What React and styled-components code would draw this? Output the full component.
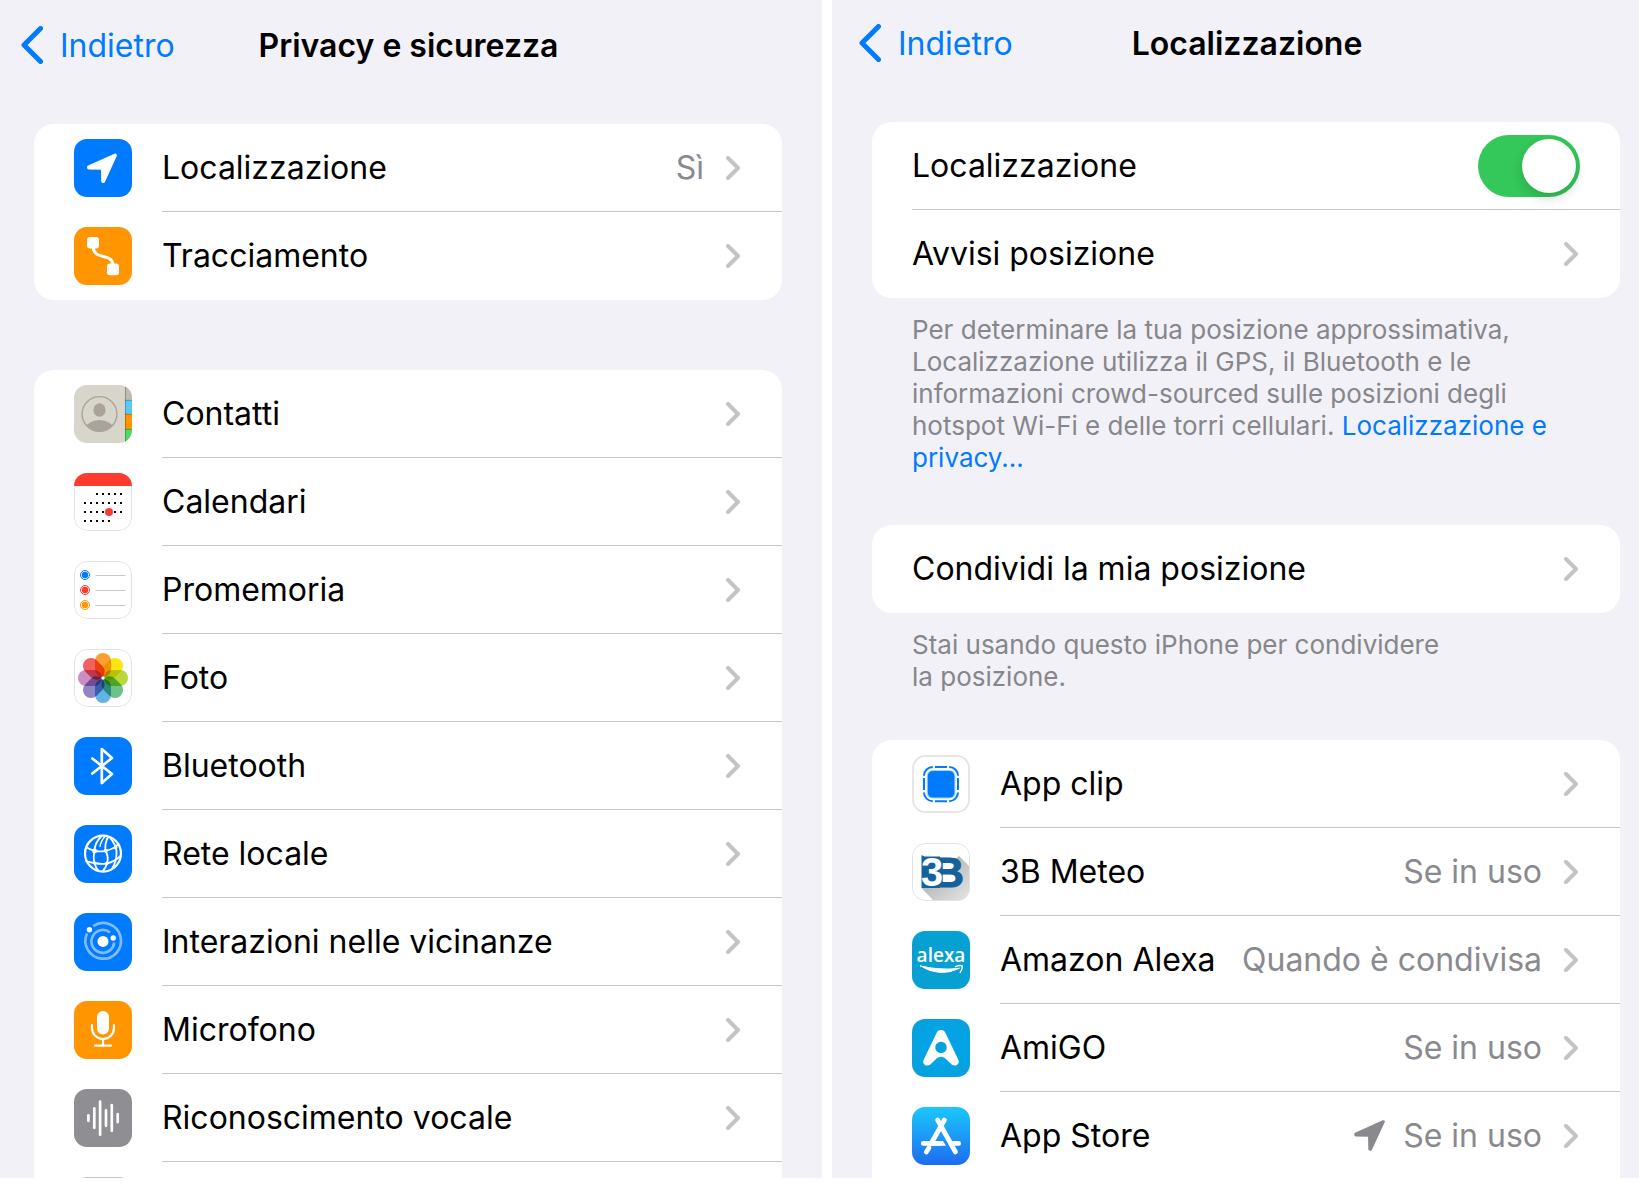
import React, { useState } from 'react';
import styled, { createGlobalStyle } from 'styled-components';

/* ---------- icons (58 x 58 tiles) ---------- */

const LocationIcon = () => (
    <Tile viewBox="0 0 58 58" $bg="#007aff">
        <path
            d="M41.2 16.2 L14.8 28 V28.8 L28.7 29 L28.9 42.3 H29.4 Z"
            fill="#fff"
            stroke="#fff"
            strokeWidth="3.4"
            strokeLinejoin="round"
        />
    </Tile>
);

const TrackingIcon = () => (
    <Tile viewBox="0 0 58 58" $bg="#ff9500">
        <rect x="13" y="10" width="12" height="11.6" rx="3" fill="#fff" />
        <rect x="33" y="36.6" width="12" height="11.6" rx="3" fill="#fff" />
        <path d="M19.2 20 C19.5 33.5 38 25.5 39 37.5" fill="none" stroke="#fff" strokeWidth="3" />
    </Tile>
);

const ContactsIcon = () => (
    <Tile viewBox="0 0 58 58" $bg="#d8d5cb">
        <rect x="51" y="0" width="7" height="15" fill="#c2bbb4" />
        <rect x="51" y="15" width="7" height="14" fill="#5ac8fa" />
        <rect x="51" y="29" width="7" height="15" fill="#ff9500" />
        <rect x="51" y="44" width="7" height="14" fill="#4cd964" />
        <path d="M51.5 0 V58 M51 15.3 H58 M51 29.3 H58 M51 44.3 H58" stroke="#000" strokeOpacity="0.25" />
        <clipPath id="contact-face">
            <circle cx="25.5" cy="29" r="17.5" />
        </clipPath>
        <g clipPath="url(#contact-face)" fill="#aaa39c">
            <ellipse cx="25.5" cy="25" rx="6.1" ry="6.7" />
            <ellipse cx="25.5" cy="44.5" rx="14" ry="9.5" />
        </g>
        <circle cx="25.5" cy="29" r="17.4" fill="none" stroke="#aaa39c" strokeWidth="1.4" />
    </Tile>
);

const calendarDots = [
    [21, [23, 29, 35, 41, 47]],
    [30, [11, 17, 23, 29, 35, 41, 47]],
    [39, [11, 17, 23, 29, 41, 47]],
    [48, [11, 17, 23, 29, 35]],
];

const CalendarIcon = () => (
    <Tile viewBox="0 0 58 58" $bg="#fff">
        <TileBorder />
        <rect width="58" height="13" fill="#ff3b30" />
        {calendarDots.map(([y, xs]) =>
            xs.map((x) => <rect key={`${x}-${y}`} x={x - 1} y={y - 1} width="2" height="2" fill="#000" />)
        )}
        <circle cx="35" cy="39" r="4" fill="#ff3b30" />
    </Tile>
);

const RemindersIcon = () => (
    <Tile viewBox="0 0 58 58" $bg="#fff">
        <TileBorder />
        {[
            ['#007aff', 14],
            ['#ff3b30', 29],
            ['#ff9500', 44],
        ].map(([color, y]) => (
            <g key={color}>
                <circle cx="11" cy={y} r="4.5" fill="none" stroke={color} />
                <circle cx="11" cy={y} r="3.2" fill={color} />
                <path d={`M21.5 ${y + 0.5} H51.5`} stroke="#c7c7cc" />
            </g>
        ))}
    </Tile>
);

const petals = ['#f9a033', '#fbe60f', '#b8d83c', '#6cc288', '#62b4e4', '#8f86c4', '#cb8ec4', '#f2605f'];

const PhotosIcon = () => (
    <Tile viewBox="0 0 58 58" $bg="#fff">
        <TileBorder />
        {petals.map((color, i) => (
            <Petal
                key={color}
                x="21"
                y="4"
                width="16"
                height="24"
                rx="8"
                fill={color}
                transform={`rotate(${i * 45} 29 29)`}
            />
        ))}
        <circle cx="29" cy="29" r="1.6" fill="#fff" />
    </Tile>
);

const BluetoothIcon = () => (
    <Tile viewBox="0 0 58 58" $bg="#007aff">
        <path
            d="M18.3 21.5 L38 37 L27.8 46 V12 L38 21 L18.3 36.5"
            fill="none"
            stroke="#fff"
            strokeWidth="2.7"
            strokeLinecap="round"
            strokeLinejoin="round"
        />
    </Tile>
);

const NetworkIcon = () => (
    <Tile viewBox="0 0 58 58" $bg="#007aff">
        <g fill="none" stroke="#fff" strokeWidth="1.8">
            <circle cx="29" cy="28.6" r="18" strokeWidth="2.2" />
            <path d="M12 22 Q16 24.5 20.5 26 Q26 27 31.5 25.8 Q40 24 45 18.5" />
            <path d="M11 35.5 Q15 37.5 20.5 38 Q27 39.5 33 38.3 Q41 36.5 46.5 31" />
            <path d="M28 10.5 Q20.5 18 20.5 26 Q19 33 20.5 38 Q21.5 43 25 46.5" />
            <path d="M34.5 11 Q30.5 18 31.5 25.8 Q35 32 33 38.3 Q32 43 28.5 46.5" />
            <path d="M35 11.5 Q43.5 21 42.5 29 Q42.5 37 37.5 44.5" />
            <path d="M32 10.5 Q26.5 16 26 22" strokeWidth="1.4" />
        </g>
        <g fill="#fff">
            <circle cx="20.5" cy="26" r="2.4" />
            <circle cx="31.8" cy="25.8" r="2" />
            <circle cx="20.5" cy="38" r="1.7" />
            <circle cx="33" cy="38.3" r="1.8" />
            <circle cx="41.6" cy="22.5" r="1.9" />
        </g>
    </Tile>
);

const NearbyIcon = () => (
    <Tile viewBox="0 0 58 58" $bg="#007aff">
        <g fill="none" stroke="#80bdff" strokeWidth="2.7">
            <path d="M19.3 13.1 A17.8 17.8 0 1 1 13.1 20.3" />
            <path d="M40.2 29.5 A11.4 11.4 0 1 1 36 19.5" />
        </g>
        <circle cx="29" cy="28.4" r="5.5" fill="#fff" />
        <circle cx="39.2" cy="25" r="2.7" fill="#fff" />
        <circle cx="15.4" cy="16.8" r="2.7" fill="#fff" />
    </Tile>
);

const MicrophoneIcon = () => (
    <Tile viewBox="0 0 58 58" $bg="#ff9500">
        <rect x="23" y="10" width="12" height="23.4" rx="6" fill="#fff" />
        <path
            d="M18 24 V27 A11 11 0 0 0 40 27 V24 M29 38 V44.5 M21 44.6 H37"
            fill="none"
            stroke="#fff"
            strokeWidth="2.2"
            strokeLinecap="round"
        />
    </Tile>
);

const SpeechIcon = () => (
    <Tile viewBox="0 0 58 58" $bg="#8e8e93">
        <path
            d="M14.4 26.3 V31.8 M20.3 19.3 V38.8 M26.1 12.5 V45.7 M32 21.3 V36.8 M37.8 16.2 V41.8 M43.7 25 V33.2"
            stroke="#fff"
            strokeWidth="2.7"
            strokeLinecap="round"
        />
    </Tile>
);

const BlankIcon = () => (
    <Tile viewBox="0 0 58 58" $bg="#c4c4c6" />
);

const AppClipIcon = () => (
    <Tile viewBox="0 0 58 58" $bg="#fff">
        <rect x="1" y="1" width="56" height="56" rx="12" fill="none" stroke="#e5e5e6" strokeWidth="2" />
        <rect x="14.8" y="15" width="28.6" height="28.6" rx="6" fill="#a6d0ff" />
        <rect x="15.8" y="16" width="26.6" height="26.6" rx="5" fill="#007aff" />
        <path
            d="M23 12 H35 M23 46.2 H35 M12 23 V35 M46 23 V35
               M12 20.8 A8.8 8.8 0 0 1 20.8 12 M37.2 12 A8.8 8.8 0 0 1 46 20.8
               M46 37.4 A8.8 8.8 0 0 1 37.2 46.2 M20.8 46.2 A8.8 8.8 0 0 1 12 37.4"
            fill="none"
            stroke="#007aff"
            strokeWidth="2"
        />
    </Tile>
);

const MeteoIcon = () => (
    <Tile viewBox="0 0 58 58" $bg="#fff">
        <linearGradient id="meteo-shade" x1="0" y1="0" x2="1" y2="1">
            <stop offset="0.3" stopColor="#b4b4b4" />
            <stop offset="1" stopColor="#e6e6e6" />
        </linearGradient>
        <path d="M47 13 L58 24 V58 H22 L9.5 45 Z" fill="url(#meteo-shade)" />
        <path d="M9.5 12 L12.5 13.5 H28 V45 H9.5 Z" fill="#14619b" />
        <rect x="28" y="16" width="17" height="26" fill="#fff" />
        <LogoText x="21" y="44.3" fontSize="43" fill="#14619b" stroke="#14619b" strokeWidth="1" $family="Liberation Sans">
            B
        </LogoText>
        <LogoText x="9" y="43.2" fontSize="40" fill="#fff" $family="Liberation Sans">
            3
        </LogoText>
        <TileBorder />
    </Tile>
);

const AlexaIcon = () => (
    <Tile viewBox="0 0 58 58" $bg="#06a0d3">
        <LogoText x="29" y="31.2" fontSize="19" fill="#fff" textAnchor="middle" $weight="600">
            alexa
        </LogoText>
        <path d="M8 34.8 Q28 47 47.5 37.2 Q28 39.8 8 34.8 Z" fill="#fff" stroke="#fff" strokeLinejoin="round" />
        <path
            d="M43.5 35.6 Q48 33.6 50.3 35 Q50.5 38 48.2 41.4"
            fill="none"
            stroke="#fff"
            strokeWidth="1.5"
            strokeLinecap="round"
        />
    </Tile>
);

const AmigoIcon = () => (
    <Tile viewBox="0 0 58 58" $bg="radial-gradient(#00a7f0, #07a0d8)">
        <path
            d="M29 11 C31.3 11 32.7 12.2 33.6 14.2 L46.2 40.5 C48.4 45 43.6 48.4 39.6 45.6 L34.4 40.4
               C31 37 27 37 23.6 40.4 L18.4 45.6 C14.4 48.4 9.6 45 11.8 40.5 L24.4 14.2 C25.3 12.2 26.7 11 29 11 Z"
            fill="#fff"
        />
        <circle cx="29" cy="28.4" r="5.7" fill="#06a2dc" />
    </Tile>
);

const AppStoreIcon = () => (
    <Tile viewBox="0 0 58 58" $bg="linear-gradient(#1bc8fc, #1d6cf1)">
        <g fill="none" stroke="#fff" strokeWidth="4.8" strokeLinecap="round">
            <path d="M32.4 13 L20 35" />
            <path d="M17 40.8 L14.3 45" />
            <path d="M25.6 13 L43.5 45" />
            <path d="M11.3 36.4 H28.5 M41 36.4 H46.7" />
        </g>
        <path d="M18 34 H31 L34 38.8 H18 Z" fill="#fff" />
        <path d="M32.2 33.5 L35.6 40.4" stroke="#1f93f7" strokeWidth="0.9" />
    </Tile>
);

const Chevron = () => (
    <ChevronSvg viewBox="0 0 14 24">
        <path d="M2 2 L12 12 L2 22" />
    </ChevronSvg>
);

const BackChevron = () => (
    <BackSvg viewBox="0 0 22 38">
        <path d="M19.5 2.5 L3 19 L19.5 35.5" />
    </BackSvg>
);

/* ---------- data ---------- */

const trackingRows = [
    { label: 'Localizzazione', icon: LocationIcon, value: 'Sì' },
    { label: 'Tracciamento', icon: TrackingIcon },
];

const privacyRows = [
    { label: 'Contatti', icon: ContactsIcon },
    { label: 'Calendari', icon: CalendarIcon },
    { label: 'Promemoria', icon: RemindersIcon },
    { label: 'Foto', icon: PhotosIcon },
    { label: 'Bluetooth', icon: BluetoothIcon },
    { label: 'Rete locale', icon: NetworkIcon },
    { label: 'Interazioni nelle vicinanze', icon: NearbyIcon },
    { label: 'Microfono', icon: MicrophoneIcon },
    { label: 'Riconoscimento vocale', icon: SpeechIcon },
    { label: '', icon: BlankIcon },
];

const appRows = [
    { label: 'App clip', icon: AppClipIcon },
    { label: '3B Meteo', icon: MeteoIcon, value: 'Se in uso' },
    { label: 'Amazon Alexa', icon: AlexaIcon, value: 'Quando è condivisa' },
    { label: 'AmiGO', icon: AmigoIcon, value: 'Se in uso' },
    { label: 'App Store', icon: AppStoreIcon, value: 'Se in uso', recent: true },
    { label: '', icon: BlankIcon },
];

/* ---------- parts ---------- */

const NavBar = ({ title, ...rest }) => (
    <Header {...rest}>
        <BackButton type="button">
            <BackChevron />
            Indietro
        </BackButton>
        <Title>{title}</Title>
    </Header>
);

const SettingsRow = ({ label, icon: Icon, value, recent }) => (
    <Row>
        <RowButton type="button">
            {Icon && <Icon />}
            <RowBody>
                <Label>{label}</Label>
                {recent && (
                    <RecentArrow viewBox="0 0 31 31">
                        <path d="M29.3 1.7 L1.8 14.2 V15 L15.5 15.3 L15.8 29.2 H16.6 Z" />
                    </RecentArrow>
                )}
                {value && <Value>{value}</Value>}
                <Chevron />
            </RowBody>
        </RowButton>
    </Row>
);

const App = () => {
    const [enabled, setEnabled] = useState(true);

    return (
        <>
            <GlobalStyle />
            <Screens>
                <Panel $left="34px" $right="40px">
                    <NavBar title="Privacy e sicurezza" $height="124px" $padding="0 26px 34px 21px" />
                    <Group $gap="70px">
                        {trackingRows.map((row) => (
                            <SettingsRow key={row.label} {...row} />
                        ))}
                    </Group>
                    <Group>
                        {privacyRows.map((row) => (
                            <SettingsRow key={row.label} {...row} />
                        ))}
                    </Group>
                </Panel>

                <Panel $left="40px" $right="19px">
                    <NavBar title="Localizzazione" $height="122px" $padding="0 4px 36px 27px" />
                    <Group>
                        <Row>
                            <ToggleRow>
                                <RowBody $end="40px">
                                    <Label as="label" htmlFor="location">
                                        Localizzazione
                                    </Label>
                                    <Toggle
                                        id="location"
                                        type="checkbox"
                                        checked={enabled}
                                        onChange={(e) => setEnabled(e.target.checked)}
                                    />
                                </RowBody>
                            </ToggleRow>
                        </Row>
                        <SettingsRow label="Avvisi posizione" />
                    </Group>
                    <Note $gap="51px">
                        Per determinare la tua posizione approssimativa, Localizzazione utilizza il GPS, il Bluetooth e
                        le informazioni crowd-sourced sulle posizioni degli hotspot Wi-Fi e delle torri cellulari.{' '}
                        <a href="#privacy">Localizzazione e privacy...</a>
                    </Note>
                    <Group>
                        <SettingsRow label="Condividi la mia posizione" />
                    </Group>
                    <Note $gap="47px">
                        Stai usando questo iPhone per condividere
                        <br />
                        la posizione.
                    </Note>
                    <Group>
                        {appRows.map((row) => (
                            <SettingsRow key={row.label} {...row} />
                        ))}
                    </Group>
                </Panel>
            </Screens>
        </>
    );
};

export default App;

// Styled Components
const GlobalStyle = createGlobalStyle`
    * {
        box-sizing: border-box;
    }

    body {
        margin: 0;
        background: #ffffff;
        color: #000000;
        font-family: Inter, 'Liberation Sans', sans-serif;
        font-size: 32px;
        line-height: 41px;
    }

    button {
        padding: 0;
        border: none;
        background: none;
        color: inherit;
        font: inherit;
        text-align: left;
        cursor: pointer;
    }
`;

const Screens = styled.main`
    display: grid;
    grid-template-columns: 822fr 807fr;
    gap: 10px;
    height: calc(100vh - 5px);
    overflow: hidden;
`;

const Panel = styled.section`
    --left: ${({ $left }) => $left};
    --right: ${({ $right }) => $right};
    min-width: 0;
    background: #f2f1f7;
`;

const Header = styled.header`
    display: grid;
    grid-template-columns: 1fr auto 1fr;
    align-items: center;
    height: ${({ $height }) => $height};
    padding: ${({ $padding }) => $padding};
`;

const BackButton = styled.button`
    && {
        display: flex;
        align-items: center;
        gap: 17px;
        color: #007aff;
    }
`;

const BackSvg = styled.svg`
    width: 22px;
    height: 38px;
    fill: none;
    stroke: #007aff;
    stroke-width: 5;
    stroke-linecap: round;
    stroke-linejoin: round;
`;

const Title = styled.h1`
    margin: 0;
    font-size: 32px;
    font-weight: 600;
`;

const Group = styled.ul`
    margin: 0 var(--right) ${({ $gap }) => $gap || '0'} var(--left);
    padding: 0;
    list-style: none;
    background: #ffffff;
    border-radius: 20px;
    overflow: hidden;
`;

const RowBody = styled.span`
    display: flex;
    flex: 1;
    align-items: center;
    align-self: stretch;
    min-width: 0;
    padding-right: ${({ $end }) => $end || '42px'};
    border-bottom: 1px solid #c6c6c8;
`;

const Row = styled.li`
    &:last-child ${RowBody} {
        border-bottom-color: transparent;
    }
`;

const RowButton = styled.button`
    && {
        display: flex;
        align-items: center;
        gap: 30px;
        width: 100%;
        height: 88px;
        padding-left: 40px;
    }
`;

const ToggleRow = styled.div`
    display: flex;
    height: 88px;
    padding-left: 40px;
`;

const Label = styled.span`
    flex: 1;
    white-space: nowrap;
`;

const Value = styled.span`
    margin-right: 22px;
    color: #8a8a8e;
    white-space: nowrap;
`;

const Tile = styled.svg`
    flex: none;
    width: 58px;
    height: 58px;
    border-radius: 13px;
    background: ${({ $bg }) => $bg};
    overflow: hidden;
    isolation: isolate;
`;

const TileBorder = styled.rect.attrs({ x: 0.5, y: 0.5, width: 57, height: 57, rx: 12.5 })`
    fill: none;
    stroke: #e2e2e4;
`;

const Petal = styled.rect`
    mix-blend-mode: multiply;
`;

const LogoText = styled.text`
    font-family: '${({ $family }) => $family || 'Open Sans'}', sans-serif;
    font-weight: ${({ $weight }) => $weight || 700};
`;

const ChevronSvg = styled.svg`
    flex: none;
    width: 14px;
    height: 24px;
    fill: none;
    stroke: #c4c4c7;
    stroke-width: 4;
    stroke-linecap: round;
    stroke-linejoin: round;
`;

const RecentArrow = styled.svg`
    flex: none;
    width: 31px;
    height: 31px;
    margin-right: 18px;
    fill: #8a8a8e;
    stroke: #8a8a8e;
    stroke-width: 3;
    stroke-linejoin: round;
`;

const Toggle = styled.input`
    appearance: none;
    width: 102px;
    height: 62px;
    margin: 0;
    border-radius: 31px;
    background: ${({ checked }) => (checked ? '#34c759' : '#e9e9ea')};
    padding: 4px;
    display: flex;
    justify-content: ${({ checked }) => (checked ? 'flex-end' : 'flex-start')};
    cursor: pointer;

    &::before {
        content: '';
        width: 54px;
        height: 54px;
        border-radius: 50%;
        background: #ffffff;
        box-shadow: 0 5px 12px rgba(0, 0, 0, 0.16);
    }
`;

const Note = styled.p`
    margin: 0 70px ${({ $gap }) => $gap} calc(var(--left) + 40px);
    padding-top: 16px;
    color: #86868b;
    font-size: 26px;
    line-height: 32px;

    a {
        color: #007aff;
        text-decoration: none;
    }
`;
